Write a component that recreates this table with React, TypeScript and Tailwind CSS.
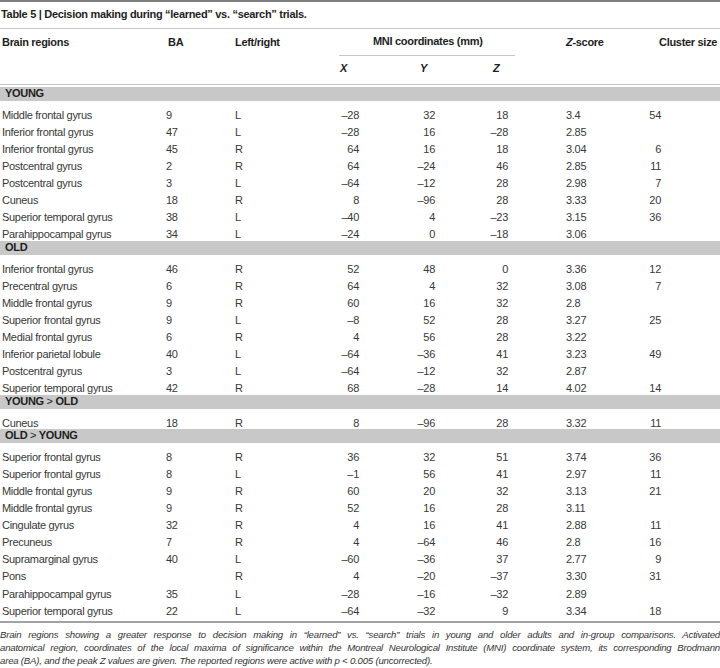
import React from 'react';

type Row = [string, string, string, string, string, string, string, string];

interface Section {
  label: React.ReactNode;
  rows: Row[];
}

const sections: Section[] = [
  {
    label: 'YOUNG',
    rows: [
      ['Middle frontal gyrus', '9', 'L', '–28', '32', '18', '3.4', '54'],
      ['Inferior frontal gyrus', '47', 'L', '–28', '16', '–28', '2.85', ''],
      ['Inferior frontal gyrus', '45', 'R', '64', '16', '18', '3.04', '6'],
      ['Postcentral gyrus', '2', 'R', '64', '–24', '46', '2.85', '11'],
      ['Postcentral gyrus', '3', 'L', '–64', '–12', '28', '2.98', '7'],
      ['Cuneus', '18', 'R', '8', '–96', '28', '3.33', '20'],
      ['Superior temporal gyrus', '38', 'L', '–40', '4', '–23', '3.15', '36'],
      ['Parahippocampal gyrus', '34', 'L', '–24', '0', '–18', '3.06', ''],
    ],
  },
  {
    label: 'OLD',
    rows: [
      ['Inferior frontal gyrus', '46', 'R', '52', '48', '0', '3.36', '12'],
      ['Precentral gyrus', '6', 'R', '64', '4', '32', '3.08', '7'],
      ['Middle frontal gyrus', '9', 'R', '60', '16', '32', '2.8', ''],
      ['Superior frontal gyrus', '9', 'L', '–8', '52', '28', '3.27', '25'],
      ['Medial frontal gyrus', '6', 'R', '4', '56', '28', '3.22', ''],
      ['Inferior parietal lobule', '40', 'L', '–64', '–36', '41', '3.23', '49'],
      ['Postcentral gyrus', '3', 'L', '–64', '–12', '32', '2.87', ''],
      ['Superior temporal gyrus', '42', 'R', '68', '–28', '14', '4.02', '14'],
    ],
  },
  {
    label: (
      <>
        YOUNG <span className="font-normal">&gt;</span> OLD
      </>
    ),
    rows: [['Cuneus', '18', 'R', '8', '–96', '28', '3.32', '11']],
  },
  {
    label: (
      <>
        OLD <span className="font-normal">&gt;</span> YOUNG
      </>
    ),
    rows: [
      ['Superior frontal gyrus', '8', 'R', '36', '32', '51', '3.74', '36'],
      ['Superior frontal gyrus', '8', 'L', '–1', '56', '41', '2.97', '11'],
      ['Middle frontal gyrus', '9', 'R', '60', '20', '32', '3.13', '21'],
      ['Middle frontal gyrus', '9', 'R', '52', '16', '28', '3.11', ''],
      ['Cingulate gyrus', '32', 'R', '4', '16', '41', '2.88', '11'],
      ['Precuneus', '7', 'R', '4', '–64', '46', '2.8', '16'],
      ['Supramarginal gyrus', '40', 'L', '–60', '–36', '37', '2.77', '9'],
      ['Pons', '', 'R', '4', '–20', '–37', '3.30', '31'],
      ['Parahippocampal gyrus', '35', 'L', '–28', '–16', '–32', '2.89', ''],
      ['Superior temporal gyrus', '22', 'L', '–64', '–32', '9', '3.34', '18'],
    ],
  },
];

const cols = 'grid grid-cols-[166px_69px_104px_81px_73px_73px_93px_61px]';

function DataRow({ row }: { row: Row }) {
  const [name, ba, side, x, y, z, zs, cluster] = row;
  return (
    <div className={`${cols} h-[17.1px] pt-[5.2px] leading-[11.6px] whitespace-nowrap`}>
      <div className="pl-[2px]">{name}</div>
      <div>{ba}</div>
      <div>{side}</div>
      <div className="flex justify-end pr-[61px]">{x}</div>
      <div className="flex justify-end pr-[58px]">{y}</div>
      <div className="flex justify-end pr-[58px]">{z}</div>
      <div>{zs}</div>
      <div className="flex justify-end pr-[59px]">{cluster}</div>
    </div>
  );
}

export default function App() {
  return (
    <div className="w-[720px] h-[668px] overflow-hidden bg-white font-['Liberation_Sans',Arial,sans-serif] text-[11px] tracking-[-0.3px] text-[#383838]">
      {/* Title */}
      <div className="border-t-2 border-[#7f7f7f]">
        <div className="h-[26px] leading-[24px] pl-[1px] font-bold text-[#1e1e1e]">
          Table 5 | Decision making during “learned” vs. “search” trials.
        </div>
      </div>

      {/* Column headers */}
      <div className={`${cols} grid-rows-[27px_28px] border-y border-[#c6c6c6] font-bold text-[#1e1e1e] whitespace-nowrap`}>
        <div className="row-start-1 col-start-1 pl-[2px] leading-[27px]">Brain regions</div>
        <div className="row-start-1 col-start-2 pl-[2px] leading-[27px]">BA</div>
        <div className="row-start-1 col-start-3 leading-[27px]">Left/right</div>
        <div className="row-start-1 col-start-4 col-span-3">
          <div className="w-[176px] h-[27px] border-b border-[#c6c6c6] pl-[34px] leading-[25px]">
            MNI coordinates (mm)
          </div>
        </div>
        <div className="row-start-1 col-start-7 leading-[27px]">
          <i>Z</i>-score
        </div>
        <div className="row-start-1 col-start-8 leading-[27px]">Cluster size</div>
        <div className="row-start-2 col-start-4 pl-[1px] leading-[24px] italic">X</div>
        <div className="row-start-2 col-start-5 leading-[24px] italic">Y</div>
        <div className="row-start-2 col-start-6 leading-[24px] italic">Z</div>
      </div>

      {/* Body */}
      <div className="pt-[2.3px] pb-[3px] border-b-2 border-[#a3a3a3]">
        {sections.map((s, i) => (
          <div key={i}>
            <div className="h-[13.4px] bg-[#c8c8c8] pl-[5px] leading-[13.4px] font-bold text-[#1e1e1e]">
              {s.label}
            </div>
            <div className="pt-[3.8px]">
              {s.rows.map((r, j) => (
                <DataRow key={j} row={r} />
              ))}
            </div>
          </div>
        ))}
      </div>

      {/* Caption */}
      <div className="pt-[5.5px] text-[9.6px] leading-[13px] italic tracking-[-0.2px] text-[#333]">
        <div className="text-justify [text-align-last:justify]">
          Brain regions showing a greater response to decision making in “learned” vs. “search” trials in young and older adults and in-group comparisons. Activated
        </div>
        <div className="text-justify [text-align-last:justify]">
          anatomical region, coordinates of the local maxima of significance within the Montreal Neurological Institute (MNI) coordinate system, its corresponding Brodmann
        </div>
        <div>
          area (BA), and the peak Z values are given. The reported regions were active with p &lt; 0.005 (uncorrected).
        </div>
      </div>
    </div>
  );
}
